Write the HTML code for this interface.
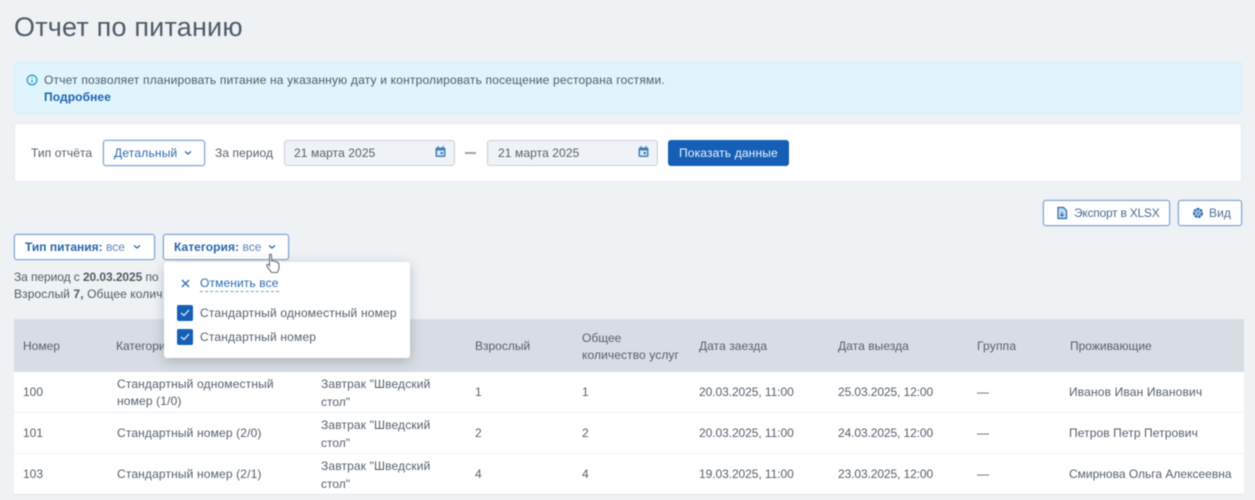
<!DOCTYPE html>
<html lang="ru"><head><meta charset="utf-8"><style>
html,body{margin:0;padding:0}
body{width:1255px;height:500px;overflow:hidden;background:#eff2f5;position:relative;font-family:"Liberation Sans","Noto Sans CJK SC",sans-serif;font-size:12px;color:#56606c}
#w{position:absolute;left:0;top:0;width:1255px;height:500px;filter:blur(.45px)}
.a{position:absolute;white-space:nowrap;line-height:16px}
.box{position:absolute;box-sizing:border-box}
.btn{position:absolute;box-sizing:border-box;background:#fff;border:1px solid #7fa6d3;border-radius:3px;height:26px;box-shadow:0 0 0 .4px #a9c4e2}
.blue{color:#2c6ab0}
b{font-weight:700}
svg{position:absolute;overflow:visible}
</style></head><body><div id="w">
<div class="a" style="left:14px;top:10px;font-size:27px;line-height:34px;color:#4f5b68;letter-spacing:.2px">Отчет по питанию</div>

<div class="box" style="left:14px;top:62px;width:1228px;height:52px;background:#dff4fd;border:1px solid #d3ecf8;border-radius:3px"></div>
<svg style="left:26px;top:74px" width="12" height="12" viewBox="0 0 12 12" fill="none" stroke="#2f9fd0" stroke-width="1.3"><circle cx="6" cy="6" r="4.8"/><path d="M6 5.5V8.4M6 3.4V4.4"/></svg>
<div class="a" style="left:44px;top:72px;font-size:12px;color:#515c68;letter-spacing:.19px">Отчет позволяет планировать питание на указанную дату и контролировать посещение ресторана гостями.</div>
<div class="a" style="left:44px;top:89px;font-size:12px;color:#1f62ae;font-weight:700;letter-spacing:.1px">Подробнее</div>

<div class="box" style="left:14px;top:123px;width:1228px;height:59px;background:#fff;border:1px solid #e6e9ee;border-radius:3px"></div>
<div class="a" style="left:31px;top:145px;letter-spacing:.1px">Тип отчёта</div>
<div class="btn" style="left:103px;top:140px;width:102px"></div>
<div class="a blue" style="left:114px;top:145px;letter-spacing:.2px">Детальный</div>
<svg style="left:184px;top:150px" width="8" height="6" fill="none" stroke="#2c6ab0" stroke-width="1.3"><path d="M1 1.5L4 4L7 1.5"/></svg>
<div class="a" style="left:215px;top:145px;letter-spacing:.1px">За период</div>

<div class="box" style="left:284px;top:140px;width:171px;height:26px;background:#eff2f6;border:1px solid #c9d0d8;border-radius:3px"></div>
<div class="a" style="left:294px;top:145px;letter-spacing:.1px">21 марта 2025</div>
<svg style="left:435px;top:146px" width="11" height="12" viewBox="0 0 11 12"><rect x=".5" y="1.5" width="10" height="9.5" rx="1.5" fill="#3f82bd"/><rect x="2" y="4.5" width="7" height="5" fill="#dbe8f3"/><rect x="5.5" y="6" width="2.5" height="2.2" fill="#3f82bd"/><path d="M3 0v2.5M8 0v2.5" stroke="#3f82bd" stroke-width="1.2"/></svg>
<div class="box" style="left:465px;top:152px;width:11px;height:2px;background:#9aa2ab"></div>
<div class="box" style="left:487px;top:140px;width:171px;height:26px;background:#eff2f6;border:1px solid #c9d0d8;border-radius:3px"></div>
<div class="a" style="left:498px;top:145px;letter-spacing:.1px">21 марта 2025</div>
<svg style="left:638px;top:146px" width="11" height="12" viewBox="0 0 11 12"><rect x=".5" y="1.5" width="10" height="9.5" rx="1.5" fill="#3f82bd"/><rect x="2" y="4.5" width="7" height="5" fill="#dbe8f3"/><rect x="5.5" y="6" width="2.5" height="2.2" fill="#3f82bd"/><path d="M3 0v2.5M8 0v2.5" stroke="#3f82bd" stroke-width="1.2"/></svg>
<div class="box" style="left:668px;top:140px;width:121px;height:26px;background:#1560b6;border-radius:3px"></div>
<div class="a" style="left:679px;top:145px;color:#eef5fc;letter-spacing:.15px">Показать данные</div>

<div class="btn" style="left:1043px;top:200px;width:127px"></div>
<svg style="left:1057px;top:207px" width="10" height="12" viewBox="0 0 10 12"><path d="M1 .5H6.5L9.5 3.5V11.5H1Z" fill="#c5d9ec" stroke="#2c6ab0" stroke-width="1.2"/><path d="M5 5V9M3.3 7.5L5 9.2L6.7 7.5" fill="none" stroke="#2c6ab0" stroke-width="1.1"/></svg>
<div class="a" style="left:1074px;top:205px;letter-spacing:-.24px;color:#4a6c94">Экспорт в XLSX</div>
<div class="btn" style="left:1178px;top:200px;width:64px"></div>
<svg style="left:1192px;top:207px" width="12" height="12" viewBox="0 0 12 12" fill="none" stroke="#2c6ab0"><circle cx="6" cy="6" r="3.8" stroke-width="2.6" stroke-dasharray="2.6 .7"/><circle cx="6" cy="6" r="1.2" stroke-width="1" fill="#fff"/></svg>
<div class="a" style="left:1209px;top:205px;color:#4a6c94;letter-spacing:.1px">Вид</div>

<div class="btn" style="left:14px;top:234px;width:141px"></div>
<div class="a blue" style="left:25px;top:239px"><b style="color:#2a66aa">Тип питания:</b> <span style="color:#5a86b8">все</span></div>
<svg style="left:133px;top:244px" width="8" height="6" fill="none" stroke="#2c6ab0" stroke-width="1.3"><path d="M1 1.5L4 4L7 1.5"/></svg>
<div class="btn" style="left:163px;top:234px;width:126px"></div>
<div class="a blue" style="left:174px;top:239px;letter-spacing:.05px"><b style="color:#2a66aa">Категория:</b> <span style="color:#5a86b8">все</span></div>
<svg style="left:268px;top:244px" width="8" height="6" fill="none" stroke="#2c6ab0" stroke-width="1.3"><path d="M1 1.5L4 4L7 1.5"/></svg>

<div class="a" style="left:14px;top:269px;color:#4f5a66;letter-spacing:-.08px">За период с <b>20.03.2025</b> по</div>
<div class="a" style="left:14px;top:286px;color:#4f5a66;letter-spacing:.1px">Взрослый <b>7,</b> Общее колич</div>

<div class="box" style="left:14px;top:319px;width:1230px;height:53px;background:#d8dde4"></div>
<div class="box" style="left:14px;top:372px;width:1230px;height:40px;background:#fff"></div>
<div class="box" style="left:14px;top:413px;width:1230px;height:40px;background:#fff"></div>
<div class="box" style="left:14px;top:454px;width:1230px;height:40px;background:#fff;box-shadow:0 1px 0 #e1e5ea"></div>

<div class="a" style="left:23px;top:338px">Номер</div>
<div class="a" style="left:116px;top:338px">Категория</div>
<div class="a" style="left:475px;top:338px">Взрослый</div>
<div class="a" style="left:582px;top:330px">Общее</div>
<div class="a" style="left:582px;top:347px;letter-spacing:.1px">количество услуг</div>
<div class="a" style="left:699px;top:338px;letter-spacing:.06px">Дата заезда</div>
<div class="a" style="left:838px;top:338px;letter-spacing:.06px">Дата выезда</div>
<div class="a" style="left:977px;top:338px;letter-spacing:.2px">Группа</div>
<div class="a" style="left:1070px;top:338px">Проживающие</div>

<div class="a" style="left:23px;top:384px">100</div>
<div class="a" style="left:117px;top:376px;letter-spacing:.15px">Стандартный одноместный</div>
<div class="a" style="left:117px;top:393px;letter-spacing:.15px">номер (1/0)</div>
<div class="a" style="left:321px;top:376px;letter-spacing:.14px">Завтрак "Шведский</div>
<div class="a" style="left:321px;top:393.5px">стол"</div>
<div class="a" style="left:475px;top:384px">1</div><div class="a" style="left:582px;top:384px">1</div>
<div class="a" style="left:699px;top:384px;letter-spacing:-.07px">20.03.2025, 11:00</div>
<div class="a" style="left:838px;top:384px;letter-spacing:-.1px">25.03.2025, 12:00</div>
<div class="a" style="left:977px;top:384px">—</div>
<div class="a" style="left:1069px;top:384px;letter-spacing:.15px">Иванов Иван Иванович</div>

<div class="a" style="left:23px;top:425px">101</div>
<div class="a" style="left:117px;top:425px;letter-spacing:.15px">Стандартный номер (2/0)</div>
<div class="a" style="left:321px;top:417px;letter-spacing:.14px">Завтрак "Шведский</div>
<div class="a" style="left:321px;top:434.5px">стол"</div>
<div class="a" style="left:475px;top:425px">2</div><div class="a" style="left:582px;top:425px">2</div>
<div class="a" style="left:699px;top:425px;letter-spacing:-.07px">20.03.2025, 11:00</div>
<div class="a" style="left:838px;top:425px;letter-spacing:-.1px">24.03.2025, 12:00</div>
<div class="a" style="left:977px;top:425px">—</div>
<div class="a" style="left:1069px;top:425px;letter-spacing:.1px">Петров Петр Петрович</div>

<div class="a" style="left:23px;top:466px">103</div>
<div class="a" style="left:117px;top:466px;letter-spacing:.15px">Стандартный номер (2/1)</div>
<div class="a" style="left:321px;top:458px;letter-spacing:.14px">Завтрак "Шведский</div>
<div class="a" style="left:321px;top:475.5px">стол"</div>
<div class="a" style="left:475px;top:466px">4</div><div class="a" style="left:582px;top:466px">4</div>
<div class="a" style="left:699px;top:466px;letter-spacing:-.07px">19.03.2025, 11:00</div>
<div class="a" style="left:838px;top:466px;letter-spacing:-.1px">23.03.2025, 12:00</div>
<div class="a" style="left:977px;top:466px">—</div>
<div class="a" style="left:1069px;top:466px">Смирнова Ольга Алексеевна</div>

<div class="box" style="left:164px;top:262px;width:246px;height:96px;background:#fff;border-radius:3px;box-shadow:0 3px 12px rgba(50,60,75,.28)"></div>
<svg style="left:181px;top:279px" width="9" height="9" fill="none" stroke="#2c6ab0" stroke-width="1.3"><path d="M1 1L8 8M8 1L1 8"/></svg>
<div class="a" style="left:200px;top:276px;color:#2c6ab0;border-bottom:1px dashed #6d9bd0;line-height:15px;letter-spacing:.12px">Отменить все</div>
<div class="box" style="left:177px;top:305px;width:16px;height:16px;background:#1560b6;border-radius:2px"></div>
<svg style="left:180px;top:309px" width="10" height="8" fill="none" stroke="#dfeafa" stroke-width="1.3"><path d="M1 4L4 6.5L9 1"/></svg>
<div class="a" style="left:200px;top:305px;letter-spacing:.18px">Стандартный одноместный номер</div>
<div class="box" style="left:177px;top:329px;width:16px;height:16px;background:#1560b6;border-radius:2px"></div>
<svg style="left:180px;top:333px" width="10" height="8" fill="none" stroke="#dfeafa" stroke-width="1.3"><path d="M1 4L4 6.5L9 1"/></svg>
<div class="a" style="left:200px;top:329px;letter-spacing:.18px">Стандартный номер</div>

<svg style="left:265px;top:253px" width="16" height="21" viewBox="0 0 16 21"><path d="M4.5 1.5C5.5 .8 6.5 1.3 6.5 2.5V8L7.5 7.8 9 8 10.8 8.6 12.5 9.4C13.5 10 14 10.8 14 12V15C14 17 13 18 12 19.5H6.5L2.5 14C1.5 12.8 1.5 12 2.2 11.5 3 11 3.8 11.6 4.5 12.5V2.5Z" fill="#fff" stroke="#6b6f75" stroke-width="1.1"/></svg>
</div></body></html>
